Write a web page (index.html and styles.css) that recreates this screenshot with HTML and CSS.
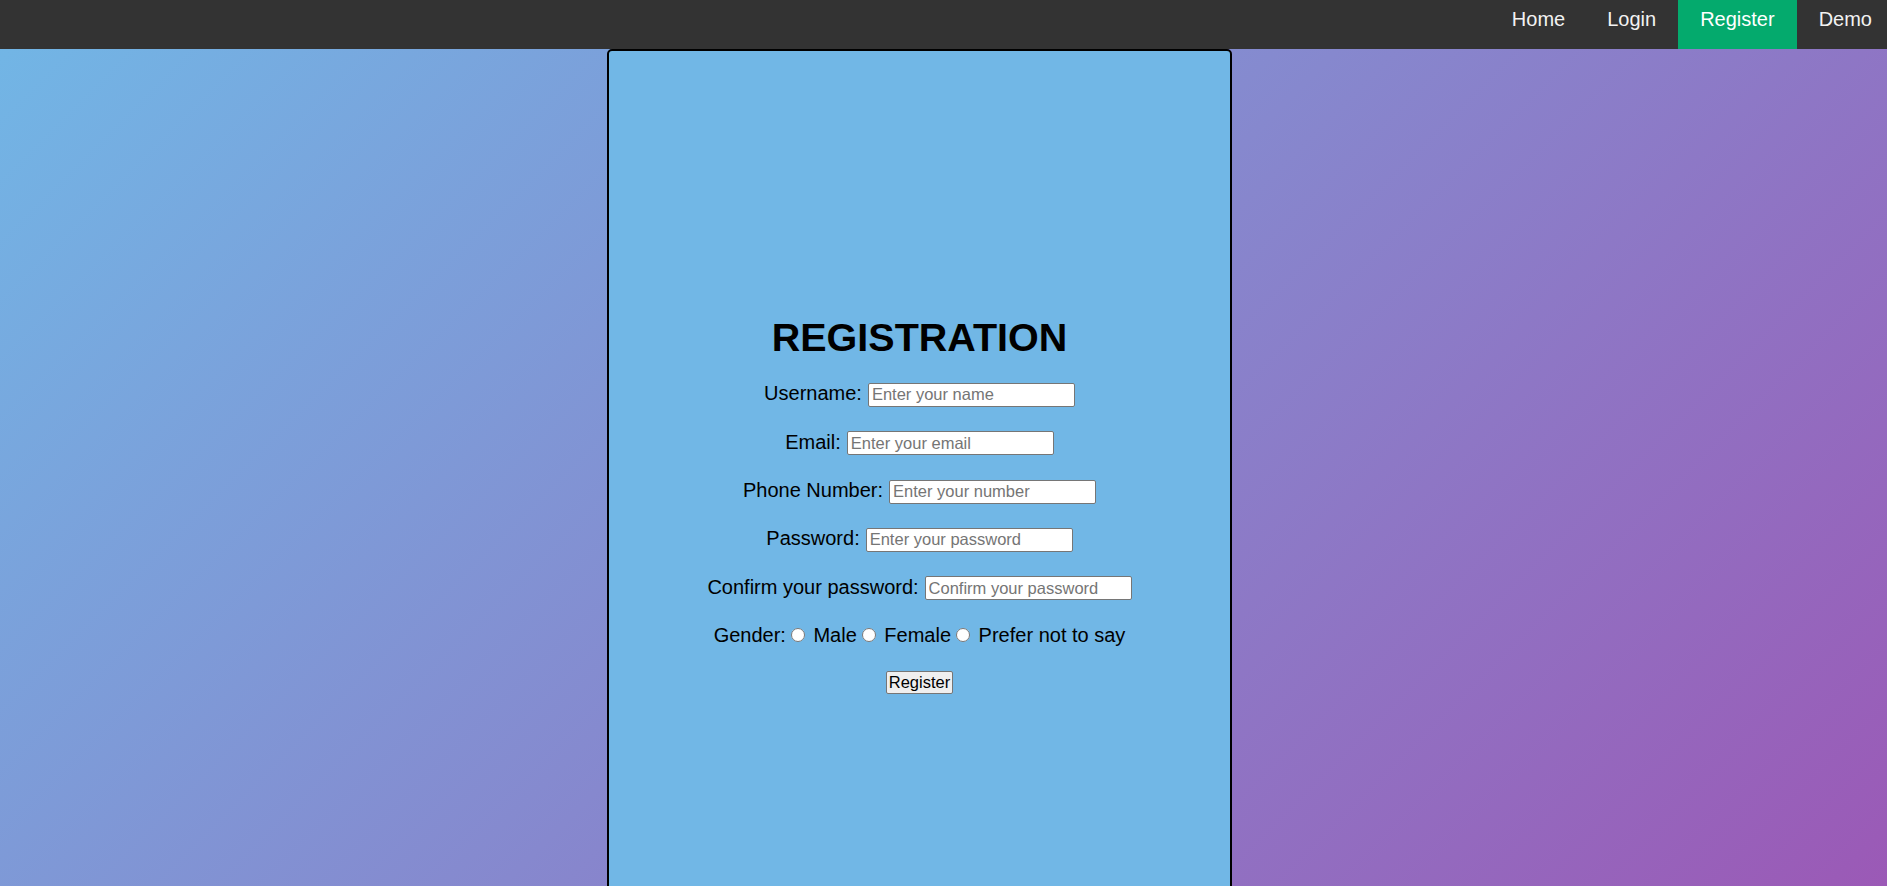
FILE: index.html
```html
<!DOCTYPE html>
<html lang="en">
<head>
<meta charset="utf-8">
<title>Registration</title>
<link rel="stylesheet" href="styles.css">
</head>
<body>
<nav class="topnav">
  <div class="nav-links">
    <a href="#" class="nav-link">Home</a>
    <a href="#" class="nav-link">Login</a>
    <a href="#" class="nav-link active">Register</a>
    <a href="#" class="nav-link last">Demo</a>
  </div>
</nav>
<main class="page">
  <section class="card">
    <form class="form">
      <h1 class="title">REGISTRATION</h1>
      <div class="row"><label class="label">Username:</label><input class="field" type="text" placeholder="Enter your name"></div>
      <div class="row"><label class="label">Email:</label><input class="field" type="text" placeholder="Enter your email"></div>
      <div class="row"><label class="label">Phone Number:</label><input class="field" type="text" placeholder="Enter your number"></div>
      <div class="row"><label class="label">Password:</label><input class="field" type="password" placeholder="Enter your password"></div>
      <div class="row"><label class="label">Confirm your password:</label><input class="field" type="password" placeholder="Confirm your password"></div>
      <div class="gender-row">Gender:<input class="radio" type="radio" name="g"><span> Male</span><input class="radio" type="radio" name="g"><span> Female</span><input class="radio" type="radio" name="g"><span> Prefer not to say</span></div>
      <div class="button-row"><button class="submit" type="button">Register</button></div>
    </form>
  </section>
</main>
</body>
</html>
```
FILE: styles.css
```css
html {
  height: 100%;
}
body {
  margin: 0;
  height: 100%;
  overflow: hidden;
  font-family: "Liberation Sans", Arial, sans-serif;
  background: linear-gradient(135deg, #71b7e6, #9b59b6);
}
.topnav {
  background: #333333;
  height: 49px;
  overflow: hidden;
  display: flex;
  justify-content: flex-end;
}
.nav-links {
  display: flex;
  margin-right: -7px;
}
.nav-link {
  display: block;
  height: 49px;
  padding: 0 22px;
  line-height: 38px;
  font-size: 20px;
  color: #f2f2f2;
  text-decoration: none;
}
.nav-link:first-child {
  padding-left: 24px;
  padding-right: 20px;
}
.nav-link.active {
  background: #04aa6d;
  color: #ffffff;
}
.page {
  display: flex;
}
.card {
  margin-left: 607px;
  width: 621px;
  min-height: 900px;
  border: 2px solid #000;
  border-radius: 5px;
  background: #71b7e6;
  box-sizing: content-box;
}
.form {
  display: flex;
  flex-direction: column;
  align-items: center;
  padding-top: 264px;
}
.title {
  margin: 0 0 22.3px 0;
  font-size: 39.5px;
  font-weight: bold;
  line-height: normal;
  color: #000;
}
.row {
  display: flex;
  align-items: baseline;
  justify-content: center;
  margin-bottom: 23.9px;
  font-size: 20px;
  color: #000;
}
.label {
  margin-right: 6px;
}
.field {
  box-sizing: border-box;
  width: 207px;
  height: 24px;
  padding: 1px 3px;
  border: 1px solid #767676;
  border-radius: 2px;
  background: #fff;
  font-family: "Liberation Sans", Arial, sans-serif;
  font-size: 16.5px;
  color: #000;
  outline: none;
}
.field::placeholder {
  color: #757575;
}
.gender-row {
  font-size: 20px;
  line-height: 23px;
  text-align: center;
  margin-bottom: 23.5px;
  color: #000;
}
.radio {
  width: 14px;
  height: 14px;
  margin: 3px 3px 0 5px;
}
.button-row {
  display: flex;
  justify-content: center;
}
.submit {
  font-family: "Liberation Sans", Arial, sans-serif;
  font-size: 16.5px;
  padding: 1px 2px;
  border: 1px solid #767676;
  border-radius: 2px;
  background: #efefef;
  color: #000;
}
```
